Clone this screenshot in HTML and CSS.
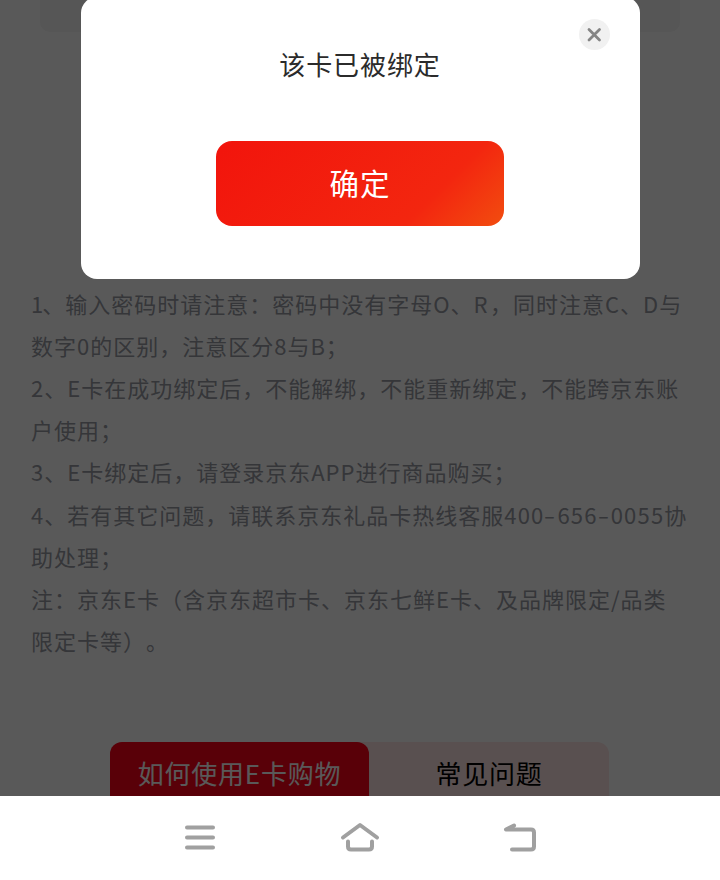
FILE: index.html
```
<!DOCTYPE html>
<html lang="zh-CN">
<head>
  <meta charset="UTF-8">
  <meta name="viewport" content="width=device-width, initial-scale=1.0">
  <title>绑定E卡</title>
  <link rel="stylesheet" href="styles.css">
</head>
<body>
  <div class="page">
    <div class="card-input"></div>

    <div class="tips">
      <p><span class="num">1</span>、输入密码时请注意：密码中没有字母O、<span class="cap">R</span>，同时注意C、D与</p>
      <p>数字0的区别，注意区分8与B；</p>
      <p>2、E卡在成功绑定后，不能解绑，不能重新绑定，不能跨京东账</p>
      <p>户使用；</p>
      <p>3、E卡绑定后，请登录京东APP进行商品购买；</p>
      <p>4、若有其它问题，请联系京东礼品卡热线客服<span class="tel">400<i>-</i>656<i>-</i>0055</span>协</p>
      <p>助处理；</p>
      <p>注：京东E卡（含京东超市卡、京东七鲜E卡、及品牌限定/品类</p>
      <p>限定卡等）。</p>
    </div>

    <div class="tabs">
      <div class="tab active">如何使用E卡购物</div>
      <div class="tab">常见问题</div>
    </div>
  </div>

  <div class="mask">
    <div class="dialog">
      <button class="close" aria-label="关闭">
        <svg width="31" height="31" viewBox="0 0 31 31"><path d="M10 10.500l10.500 10.500M20.500 10.500l-10.500 10.500"/></svg>
      </button>
      <p class="message">该卡已被绑定</p>
      <button class="confirm">确定</button>
    </div>
  </div>

  <div class="navbar">
    <svg width="40" height="40" viewBox="0 0 40 40"><path d="M7 11.500h26M7 21.500h26M7 31.500h26"/></svg>
    <svg width="40" height="40" viewBox="0 0 40 40"><path d="M3 21.500L20 9 37 21.500M8 25.500v5q0 3 3 3h18q3 0 3-3v-5"/></svg>
    <svg width="40" height="40" viewBox="0 0 40 40"><path d="M14 9.500L6 13.500h25q3 0 3 3v14q0 3-3 3H12"/></svg>
  </div>
</body>
</html>
```

FILE: styles.css
```
* { box-sizing: border-box; margin: 0; padding: 0; }
body { width: 720px; height: 880px; overflow: hidden; background: #fff; font-family: "Noto Sans CJK SC", sans-serif; }
button { border: none; font-family: inherit; }

.page { height: 796px; overflow: hidden; }
.card-input { height: 32px; margin: 0 40px; background: #f5f5f5; border-radius: 0 0 10px 10px; }

.tips { margin: 249.5px 0 0 31px; color: #989aa3; font-size: 22px; letter-spacing: 1px; line-height: 42.2px; text-spacing-trim: space-all; }
.tips p { white-space: nowrap; }
.num { letter-spacing: -1px; }
.cap { letter-spacing: 2.5px; }
.tel { letter-spacing: 1.2px; }
.tel i { display: inline-block; width: 13px; font-style: normal; text-align: center; transform: scaleX(1.5); }

.tabs { display: flex; width: 499px; height: 80px; margin: 81px 0 0 110px; background: #ffe5e5; border-radius: 12px; }
.tab { flex: 1; text-align: center; color: #000; font-size: 26px; line-height: 62px; letter-spacing: 0.8px; }
.tab.active { flex: 0 0 259px; background: #ff0017; border-radius: 12px; color: #fff; }

.mask { position: absolute; top: 0; left: 0; width: 720px; height: 796px; background: rgba(0,0,0,0.65); }
.dialog { position: relative; width: 559px; height: 282px; margin: -3px 0 0 80.5px; padding-top: 47px; background: #fff; border-radius: 16px; text-align: center; }
.message { color: #2b2b2b; font-size: 26px; line-height: 40px; letter-spacing: 0.9px; }
.confirm { width: 288px; height: 85px; margin-top: 57px; padding-bottom: 3px; border-radius: 16px; background: linear-gradient(135deg, #f2140c 0%, #f3260f 73%, #f24d0f 100%); color: #fff; font-size: 29.5px; letter-spacing: 1px; }
.close { position: absolute; top: 22px; right: 29.5px; width: 31px; height: 31px; border-radius: 50%; background: #f1f1f1; }
.close svg { display: block; fill: none; stroke: #858585; stroke-width: 2.8; stroke-linecap: round; }

.navbar { display: flex; justify-content: center; gap: 120px; height: 84px; padding-top: 20px; background: #fff; }
.navbar svg { fill: none; stroke: #a0a0a0; stroke-width: 4; stroke-linecap: round; stroke-linejoin: round; }
```
